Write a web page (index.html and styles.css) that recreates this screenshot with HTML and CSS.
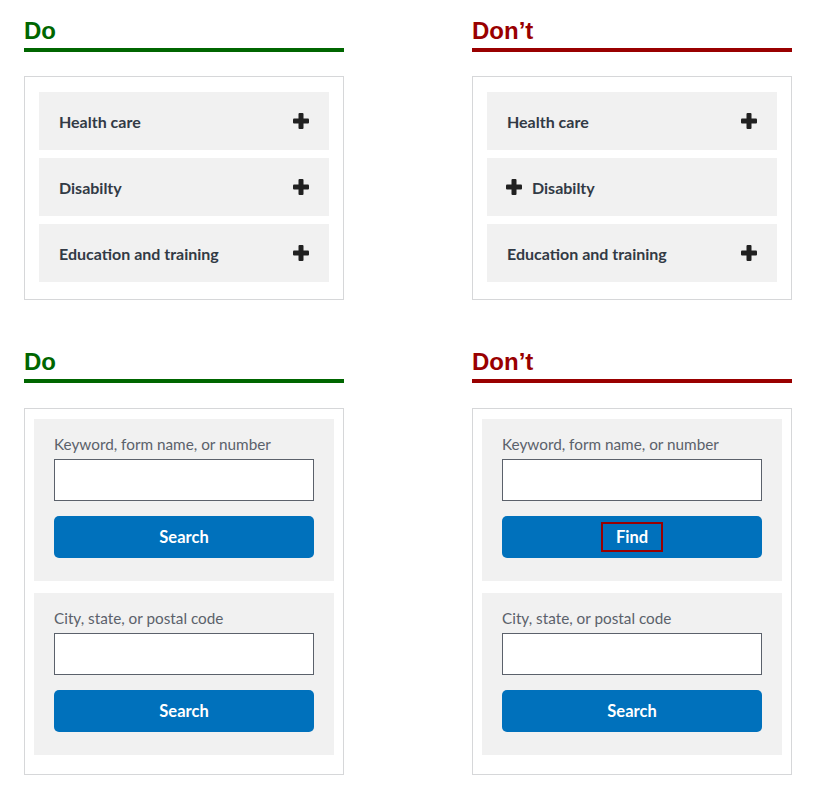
FILE: index.html
```html
<!DOCTYPE html>
<html lang="en">
<head>
    <meta charset="UTF-8">
    <title>Do and Don't</title>
<link rel="stylesheet" href="styles.css">
</head>
<body>
    <div class="grid">
        <div class="example">
            <h2 class="heading do">Do</h2>
            <div class="frame acc-frame">
                <div class="acc-item"><span>Health care</span><svg class="plus" viewBox="0 0 16 16"><rect x="5.5" y="0" width="5" height="16" rx="1"/><rect x="0" y="5.5" width="16" height="5" rx="1"/></svg></div>
                <div class="acc-item"><span>Disabilty</span><svg class="plus" viewBox="0 0 16 16"><rect x="5.5" y="0" width="5" height="16" rx="1"/><rect x="0" y="5.5" width="16" height="5" rx="1"/></svg></div>
                <div class="acc-item"><span>Education and training</span><svg class="plus" viewBox="0 0 16 16"><rect x="5.5" y="0" width="5" height="16" rx="1"/><rect x="0" y="5.5" width="16" height="5" rx="1"/></svg></div>
            </div>
        </div>

        <div class="example">
            <h2 class="heading dont">Don’t</h2>
            <div class="frame acc-frame">
                <div class="acc-item"><span>Health care</span><svg class="plus" viewBox="0 0 16 16"><rect x="5.5" y="0" width="5" height="16" rx="1"/><rect x="0" y="5.5" width="16" height="5" rx="1"/></svg></div>
                <div class="acc-item left-icon"><svg class="plus" viewBox="0 0 16 16"><rect x="5.5" y="0" width="5" height="16" rx="1"/><rect x="0" y="5.5" width="16" height="5" rx="1"/></svg><span>Disabilty</span></div>
                <div class="acc-item"><span>Education and training</span><svg class="plus" viewBox="0 0 16 16"><rect x="5.5" y="0" width="5" height="16" rx="1"/><rect x="0" y="5.5" width="16" height="5" rx="1"/></svg></div>
            </div>
        </div>

        <div class="example second">
            <h2 class="heading do">Do</h2>
            <div class="frame form-frame">
                <div class="panel">
                    <label class="field-label">Keyword, form name, or number</label>
                    <input class="text-input" type="text">
                    <button class="btn">Search</button>
                </div>
                <div class="panel">
                    <label class="field-label">City, state, or postal code</label>
                    <input class="text-input" type="text">
                    <button class="btn">Search</button>
                </div>
            </div>
        </div>

        <div class="example second">
            <h2 class="heading dont">Don’t</h2>
            <div class="frame form-frame">
                <div class="panel">
                    <label class="field-label">Keyword, form name, or number</label>
                    <input class="text-input" type="text">
                    <button class="btn"><span class="flagged">Find</span></button>
                </div>
                <div class="panel">
                    <label class="field-label">City, state, or postal code</label>
                    <input class="text-input" type="text">
                    <button class="btn">Search</button>
                </div>
            </div>
        </div>
    </div>
</body>
</html>
```

FILE: styles.css
```css
body {
    margin: 0;
    padding: 17px 24px 0;
    background-color: #fff;
    font-family: 'Lato', sans-serif;
    color: #323a45;
}

.grid {
    display: grid;
    grid-template-columns: 320px 320px;
    column-gap: 128px;
    row-gap: 48px;
}

.heading {
    margin: 0 0 24px;
    padding-bottom: 3px;
    font-family: 'Liberation Sans', Arial, sans-serif;
    font-size: 24px;
    line-height: 28px;
    font-weight: bold;
    border-bottom: 4px solid;
}

.second .heading {
    margin-bottom: 25px;
}

.heading.do {
    color: #006600;
    border-color: #006600;
}

.heading.dont {
    color: #990000;
    border-color: #990000;
}

.frame {
    border: 1px solid #d6d7d9;
}

.acc-frame {
    padding: 15px 14px 17px;
    display: flex;
    flex-direction: column;
    gap: 8px;
}

.acc-item {
    height: 58px;
    padding: 0 20px;
    background-color: #f1f1f1;
    display: flex;
    align-items: center;
    justify-content: space-between;
    font-size: 16px;
    font-weight: bold;
}

.acc-item.left-icon {
    justify-content: flex-start;
    gap: 10px;
}

.plus {
    width: 16px;
    height: 16px;
    fill: #212121;
}

.acc-item.left-icon .plus {
    margin-left: -1px;
}

.form-frame {
    padding: 10px 9px 19px;
    display: flex;
    flex-direction: column;
    gap: 12px;
}

.panel {
    background-color: #f1f1f1;
    padding: 13px 20px 23px;
    display: flex;
    flex-direction: column;
}

.field-label {
    margin-bottom: 2px;
    font-size: 15.3px;
    line-height: 25px;
    color: #5b616b;
}

.text-input {
    box-sizing: border-box;
    height: 42px;
    margin: 0;
    border: 1px solid #5b616b;
    background-color: #fff;
}

.btn {
    margin-top: 15px;
    height: 42px;
    border: none;
    border-radius: 5px;
    background-color: #0071bc;
    color: #fff;
    font-family: 'Lato', sans-serif;
    font-size: 16.5px;
    font-weight: bold;
    display: flex;
    align-items: center;
    justify-content: center;
}

.flagged {
    width: 58px;
    height: 26px;
    line-height: 26px;
    border: 2px solid #990000;
    text-align: center;
}
```
